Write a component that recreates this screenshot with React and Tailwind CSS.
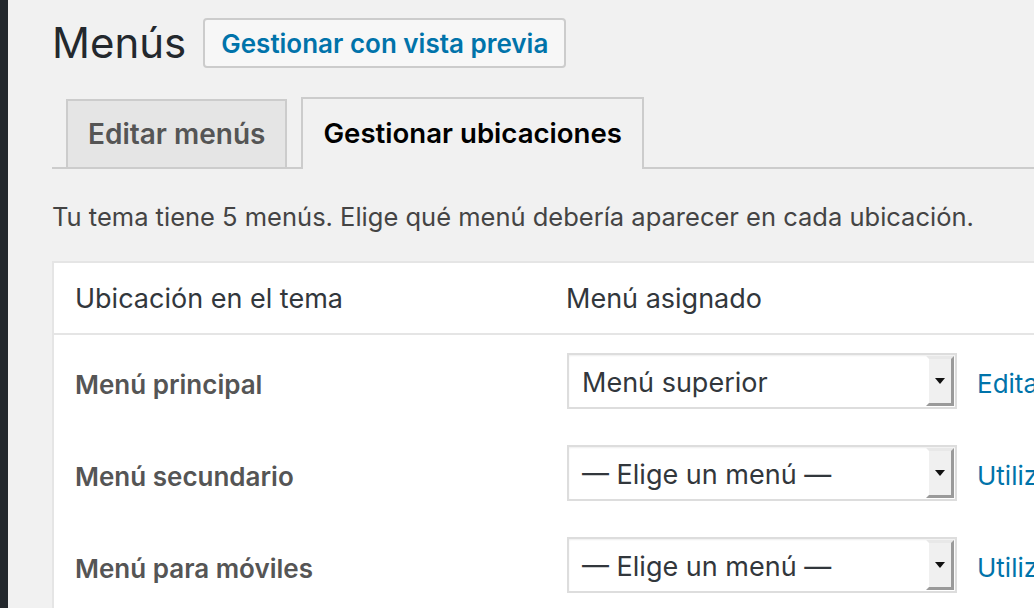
import React from "react";

const font = { fontFamily: "Inter, 'Noto Sans', sans-serif" };

function Select({ value }) {
  return (
    <div className="flex h-[56px] w-[390px] shrink-0 items-stretch border-2 border-[#dddddd] bg-white shadow-[inset_0_1px_2px_rgba(0,0,0,0.07)]">
      <div className="flex flex-1 items-center pl-[13px] pt-[4px] text-[27px] text-[#32373c]">{value}</div>
      <div className="my-[1px] mr-[1px] flex w-[28px] items-center justify-center border-[3px] border-t-[#e8e8e8] border-l-[#ffffff] border-b-[#9a9a9a] border-r-[#9a9a9a] bg-[#f0f0f0]">
        <svg width="10" height="6" viewBox="0 0 10 6"><path d="M0 0 L10 0 L5 6 Z" fill="#111" /></svg>
      </div>
    </div>
  );
}

function Row({ label, value, link }) {
  return (
    <div className="flex h-[92px] items-center">
      <div className="w-[513px] shrink-0 pl-[21px] pt-[7px] text-[26px] font-semibold text-[#555555]">{label}</div>
      <Select value={value} />
      <a className="ml-[20px] shrink-0 whitespace-nowrap pt-[4px] text-[26px] text-[#0073aa]">{link}</a>
    </div>
  );
}

export default function App() {
  return (
    <div className="flex h-[608px] w-[1034px] overflow-hidden bg-[#f1f1f1]" style={font}>
      <div className="w-[8px] shrink-0 bg-[#23282d]" />
      <div className="flex min-w-0 flex-1 flex-col pl-[44px]">
        <div className="mt-[18px] flex items-center">
          <h1 className="text-[42px] font-normal leading-none text-[#23282d]">Menús</h1>
          <div className="ml-[17px] flex h-[50px] items-center rounded-[4px] border-2 border-[#cccccc] bg-[#f7f7f7] px-[16px] text-[26px] font-semibold text-[#0073aa]">
            Gestionar con vista previa
          </div>
        </div>
        <div className="mt-[31px] flex h-[70px] items-end border-b-2 border-[#cccccc] pl-[14px]">
          <div className="-mb-[2px] flex h-[70px] shrink-0 items-center border-2 border-[#cccccc] bg-[#e5e5e5] px-[20px] text-[28px] font-semibold text-[#555555]">
            Editar menús
          </div>
          <div className="-mb-[2px] ml-[14px] flex h-[72px] shrink-0 items-center border-2 border-b-0 border-[#cccccc] bg-[#f1f1f1] px-[20px] text-[27.6px] font-semibold text-black">
            Gestionar ubicaciones
          </div>
        </div>
        <p className="mt-[29px] whitespace-nowrap text-[25.5px] text-[#444444]">
          Tu tema tiene 5 menús. Elige qué menú debería aparecer en cada ubicación.
        </p>
        <div className="mt-[25px] w-[1100px] border-2 border-[#e5e5e5] bg-white">
          <div className="flex h-[72px] items-center border-b-2 border-[#e5e5e5] pt-[2px] text-[27px] text-[#32373c]">
            <div className="w-[512px] shrink-0 pl-[21px]">Ubicación en el tema</div>
            <div>Menú asignado</div>
          </div>
          <Row label="Menú principal" value="Menú superior" link="Editar" />
          <Row label="Menú secundario" value="— Elige un menú —" link="Utilizar un nuevo menú" />
          <Row label="Menú para móviles" value="— Elige un menú —" link="Utilizar un nuevo menú" />
        </div>
      </div>
    </div>
  );
}
